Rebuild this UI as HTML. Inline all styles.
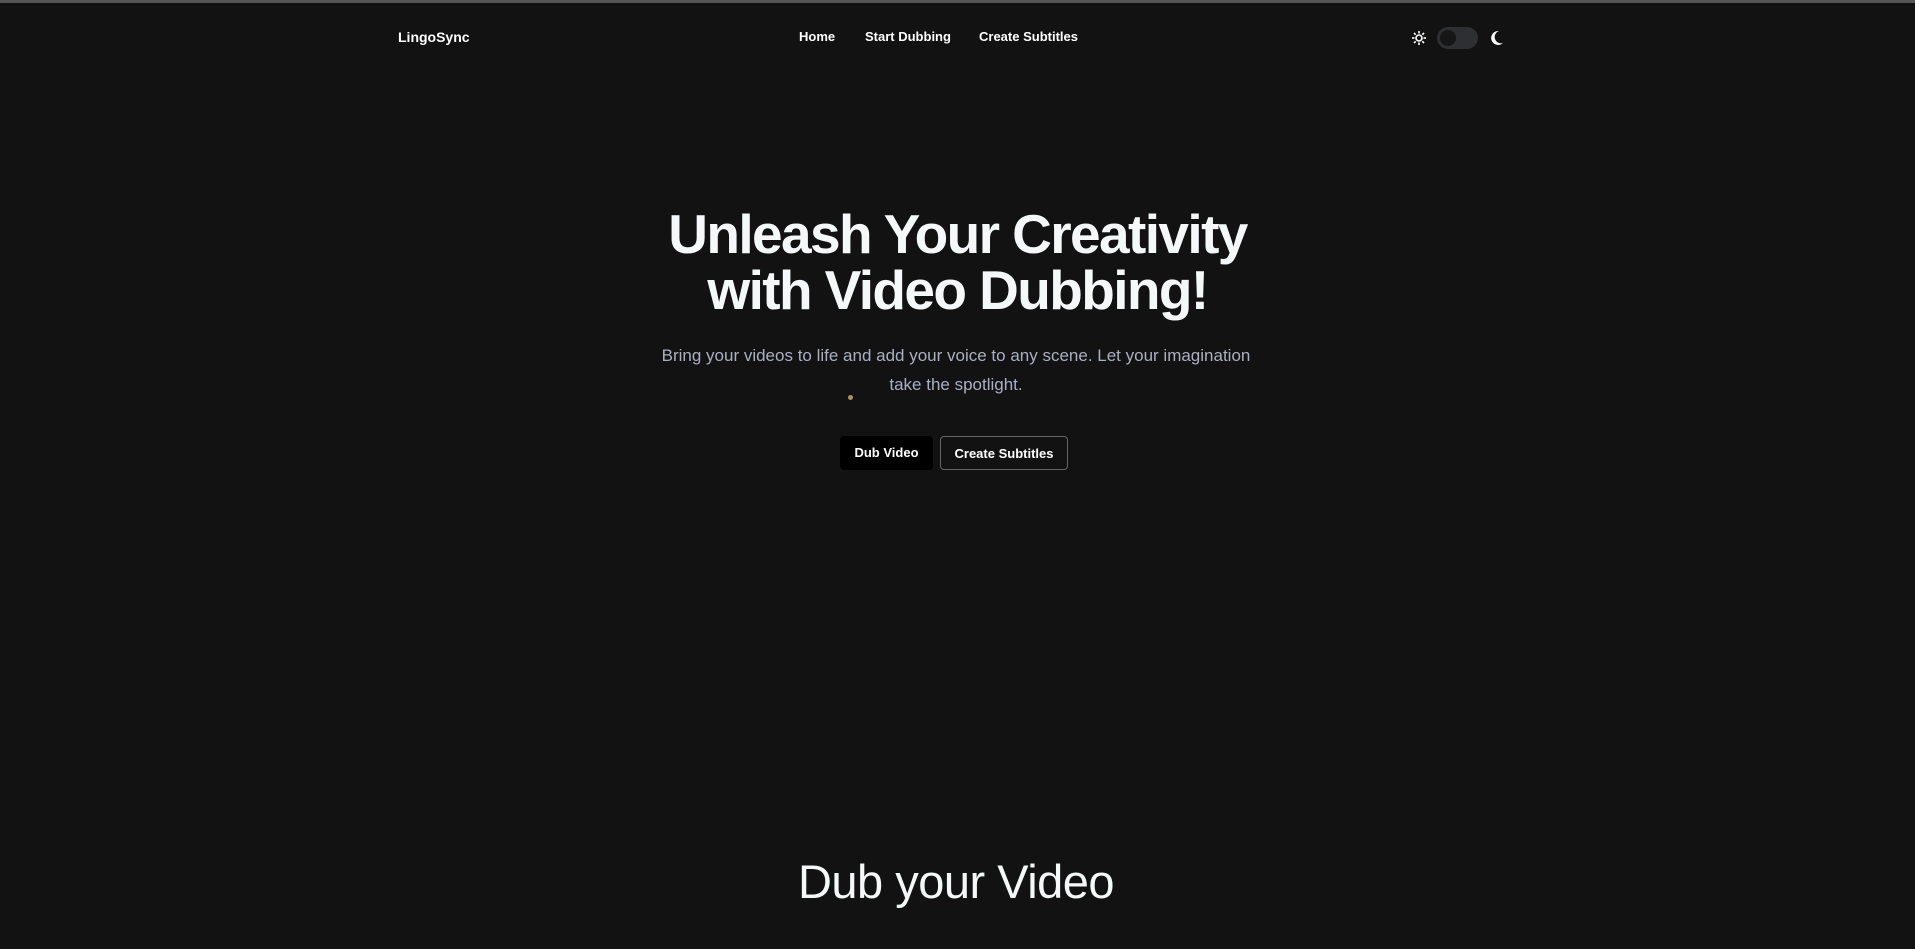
<!DOCTYPE html>
<html><head><meta charset="utf-8"><style>
html,body{margin:0;padding:0;}
body{width:1915px;height:949px;background:#121212;overflow:hidden;font-family:"Liberation Sans",sans-serif;color:#fff;position:relative;border-top:3px solid #555;box-sizing:border-box;}
.a{position:absolute;white-space:nowrap;}
.nav{font-size:13px;font-weight:bold;top:26px;}
h1{position:absolute;left:0;width:1915px;top:203px;margin:0;text-align:center;font-size:55px;line-height:56px;font-weight:bold;letter-spacing:-1.6px;color:#f4f8f8;}
p{position:absolute;left:0;width:1912px;top:338px;margin:0;text-align:center;font-size:17px;line-height:29px;color:#a9b0c2;}
.btn{position:absolute;top:433px;height:34px;line-height:33px;font-size:13px;font-weight:bold;text-align:center;border-radius:4px;box-sizing:border-box;}
</style></head><body>
<div class="a nav" style="left:398px;font-size:14px;">LingoSync</div>
<div class="a nav" style="left:799px;">Home</div>
<div class="a nav" style="left:865px;">Start Dubbing</div>
<div class="a nav" style="left:979px;">Create Subtitles</div>
<svg class="a" style="left:1412px;top:28px" width="14" height="14" viewBox="0 0 14 14"><circle cx="7" cy="7" r="3" fill="none" stroke="#fff" stroke-width="1.6"/><g stroke="#fff" stroke-width="1.6"><line x1="7" y1="0" x2="7" y2="2.5"/><line x1="7" y1="11.5" x2="7" y2="14"/><line x1="0" y1="7" x2="2.5" y2="7"/><line x1="11.5" y1="7" x2="14" y2="7"/><line x1="2" y1="2" x2="3.7" y2="3.7"/><line x1="10.3" y1="10.3" x2="12" y2="12"/><line x1="2" y1="12" x2="3.7" y2="10.3"/><line x1="10.3" y1="3.7" x2="12" y2="2"/></g></svg>
<div class="a" style="left:1437px;top:24px;width:41px;height:22px;border-radius:11px;background:#2e2f33;"><div style="position:absolute;left:3px;top:3px;width:16px;height:16px;border-radius:8px;background:#161616;"></div></div>
<svg class="a" style="left:1490px;top:27px" width="14" height="16" viewBox="0 0 14 16"><path d="M9 1A7 7 0 1 0 13 13A6 6 0 0 1 9 1Z" fill="#fff"/></svg>
<h1>Unleash Your Creativity<br>with Video Dubbing!</h1>
<p>Bring your videos to life and add your voice to any scene. Let your imagination<br>take the spotlight.</p>
<div class="a" style="left:848px;top:392px;width:5px;height:5px;border-radius:3px;background:#b0905e;"></div>
<div class="btn" style="left:840px;width:93px;background:#000;">Dub Video</div>
<div class="btn" style="left:940px;width:128px;border:1px solid #666;">Create Subtitles</div>
<div class="a" style="left:0;width:1912px;text-align:center;top:851px;font-size:47px;letter-spacing:-0.5px;color:#f4f8f8;">Dub your Video</div>
</body></html>
